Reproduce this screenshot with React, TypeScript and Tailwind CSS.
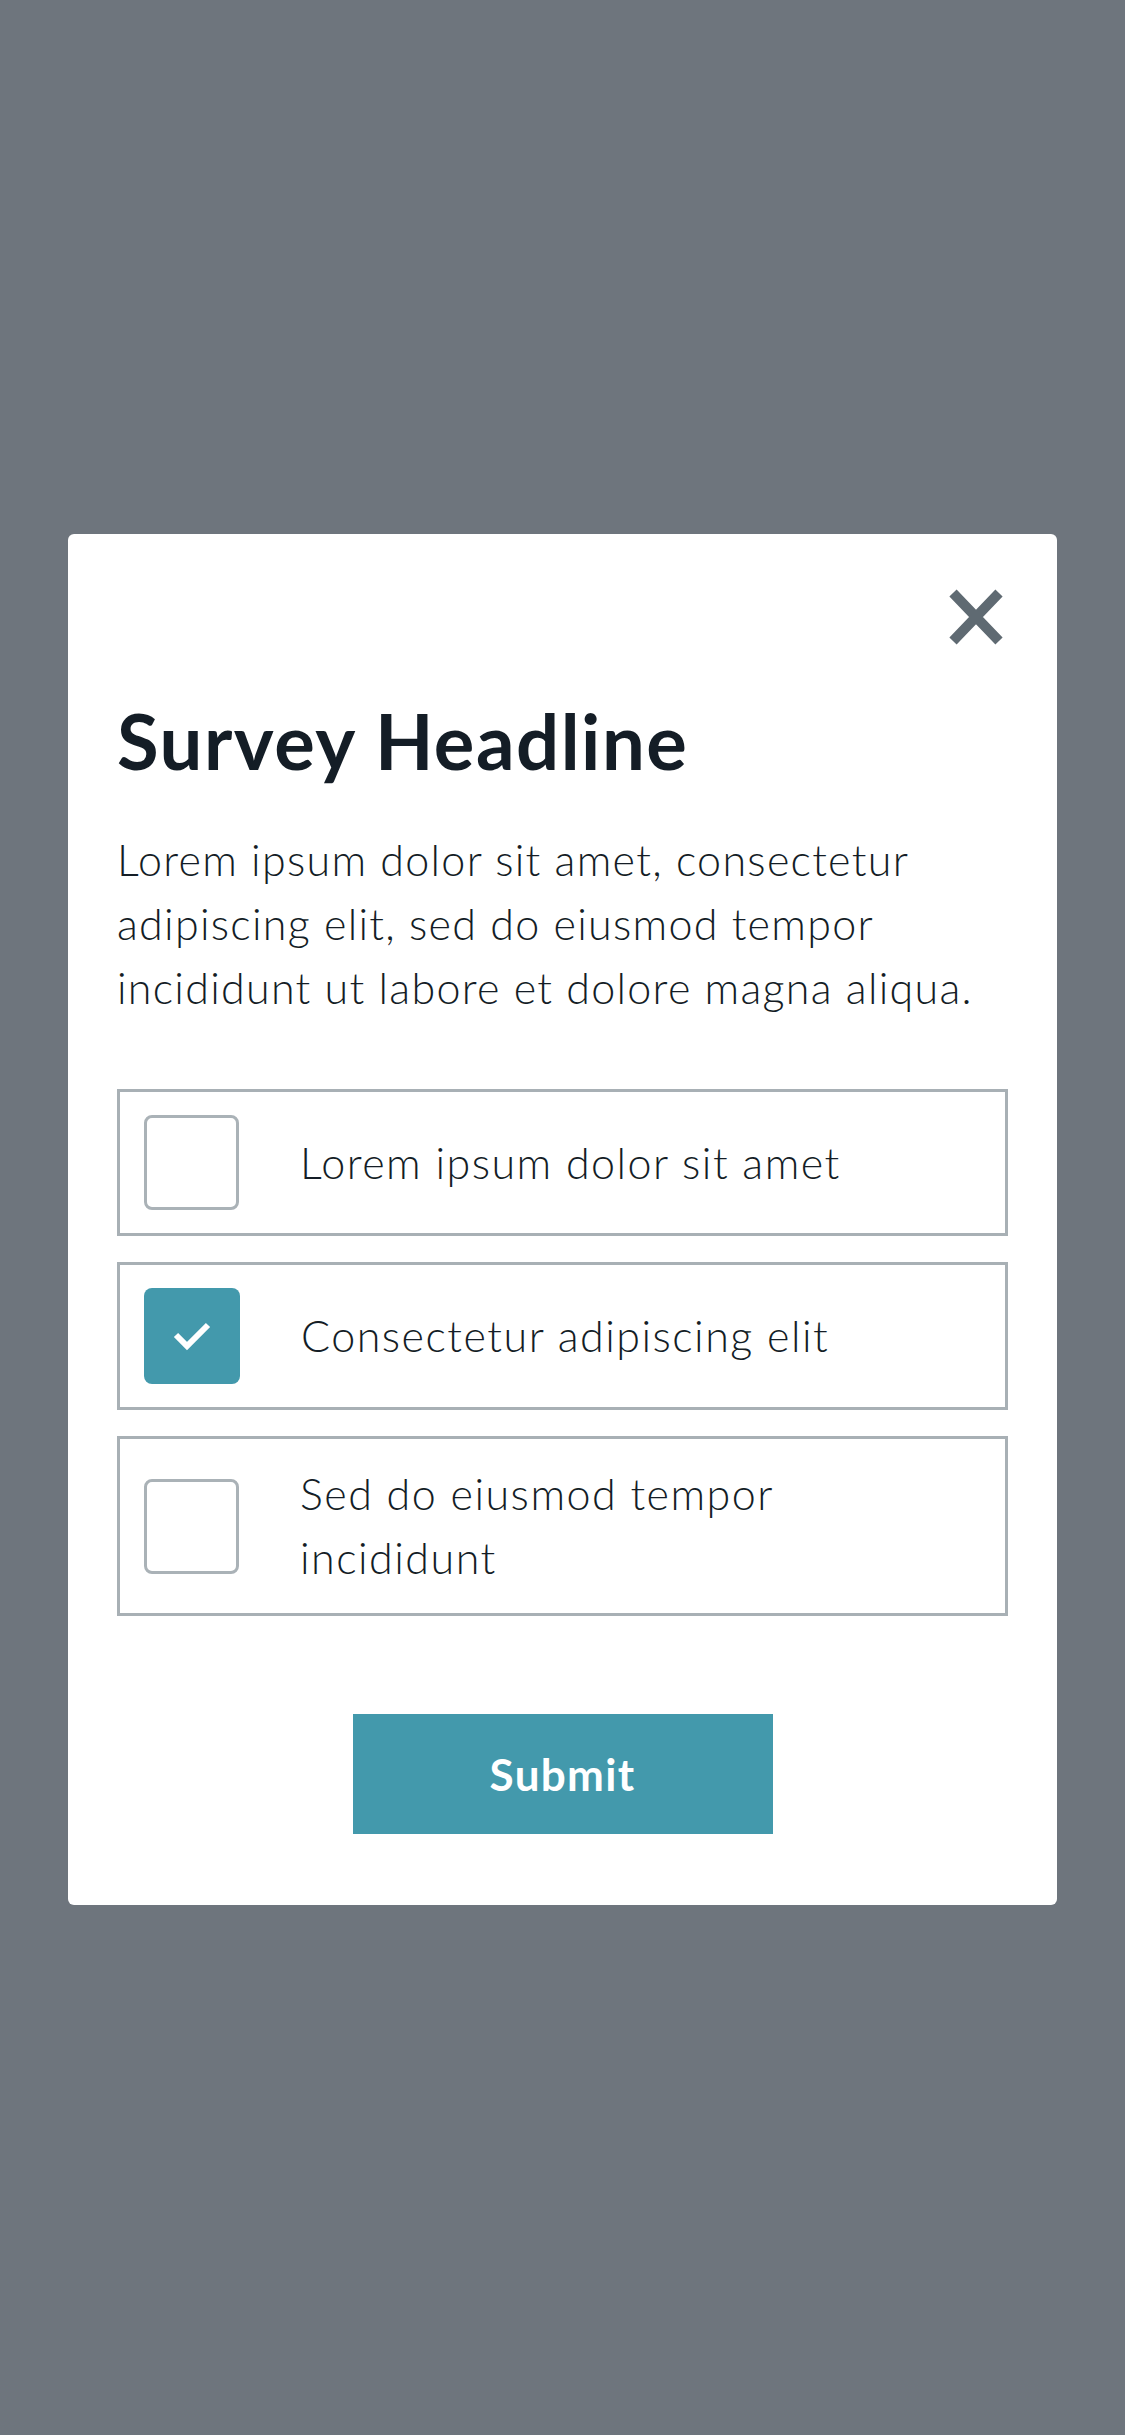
import React, { useState } from 'react';

const options: React.ReactNode[] = [
  'Lorem ipsum dolor sit amet',
  'Consectetur adipiscing elit',
  <>
    Sed do eiusmod tempor
    <br />
    incididunt
  </>,
];

const CloseIcon: React.FC = () => (
  <svg width="54" height="56" viewBox="0 0 54 56" fill="none" stroke="#5f6a72" strokeWidth={10}>
    <path d="M4 4L50 52M50 4L4 52" />
  </svg>
);

const App: React.FC = () => {
  const [checked, setChecked] = useState<boolean[]>([false, true, false]);

  const toggle = (i: number) => {
    setChecked((prev) => prev.map((v, j) => (j === i ? !v : v)));
  };

  return (
    <div
      className="min-h-screen w-full bg-[#6e757d] pt-[534px] px-[68px]"
      style={{ fontFamily: 'Lato, "Noto Sans", sans-serif' }}
    >
      <div className="flex flex-col rounded-[6px] bg-white px-[49px] pt-[55px] pb-[71px]">
        {/* Close button */}
        <div className="flex justify-end pr-[5px]">
          <button type="button" aria-label="Close" className="h-[56px] w-[54px]">
            <CloseIcon />
          </button>
        </div>

        <h1 className="mt-[58px] text-[76px] font-bold leading-none tracking-[0.02em] text-[#141d26]">
          Survey Headline
        </h1>

        <p className="mt-[49px] text-[43px] font-light leading-[64px] tracking-[0.03em] text-[#141d26]">
          Lorem ipsum dolor sit amet, consectetur
          <br />
          adipiscing elit, sed do eiusmod tempor
          <br />
          incididunt ut labore et dolore magna aliqua.
        </p>

        <div className="mt-[69px] flex flex-col gap-[26px]">
          {options.map((label, i) => (
            <label
              key={i}
              className="flex cursor-pointer items-center border-[3px] border-[#a8b0b5] py-[23px] pl-[24px] pr-[20px]"
            >
              <input type="checkbox" className="sr-only" checked={checked[i]} onChange={() => toggle(i)} />
              {checked[i] ? (
                <span className="flex h-[96px] w-[96px] shrink-0 items-center justify-center rounded-[8px] bg-[#4399ac]">
                  <svg width="40" height="32" viewBox="0 0 40 32" fill="none" stroke="white" strokeWidth={6}>
                    <path d="M4 15L15 26L36 5" />
                  </svg>
                </span>
              ) : (
                <span className="h-[95px] w-[95px] shrink-0 rounded-[8px] border-[3px] border-[#aab2b7] bg-white" />
              )}
              <span className="ml-[61px] whitespace-nowrap text-[43px] font-light leading-[64px] tracking-[0.035em] text-[#141d26]">
                {label}
              </span>
            </label>
          ))}
        </div>

        <div className="mt-[98px] flex justify-center">
          <button
            type="button"
            className="h-[120px] w-[420px] bg-[#4399ac] text-[44px] font-bold tracking-[0.03em] text-white"
          >
            Submit
          </button>
        </div>
      </div>
    </div>
  );
};

export default App;
